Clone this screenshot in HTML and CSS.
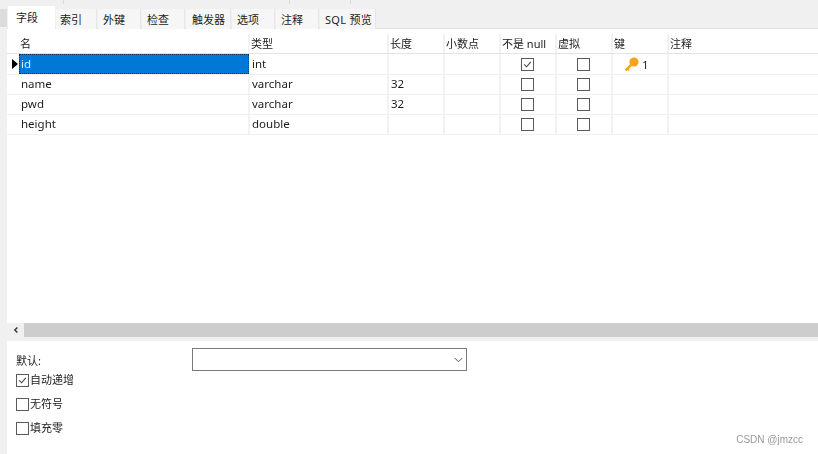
FILE: index.html
```html
<!DOCTYPE html>
<html lang="zh-CN">
<head>
<meta charset="utf-8">
<title>字段</title>
<link rel="stylesheet" href="styles.css">
</head>
<body>
<div class="app">
  <aside class="rail"><div class="rail-mark"></div></aside>
  <main class="content">
    <div class="topbar">
      <div class="toolstrip">
        <span class="tool tool-a"></span>
        <span class="tool tool-b"></span>
        <span class="tool tool-c"></span>
      </div>
      <nav class="tabs">
        <span class="tab active">字段</span>
        <span class="tab w41">索引</span>
        <span class="tab w43">外键</span>
        <span class="tab w43">检查</span>
        <span class="tab w44">触发器</span>
        <span class="tab w42">选项</span>
        <span class="tab w42">注释</span>
        <span class="tab w55">SQL 预览</span>
      </nav>
    </div>
    <section class="grid">
      <div class="row head">
        <div class="mark"></div>
        <div class="cell">名</div><div class="cell">类型</div><div class="cell">长度</div><div class="cell">小数点</div><div class="cell">不是 null</div><div class="cell">虚拟</div><div class="cell">键</div><div class="cell">注释</div>
      </div>
      <div class="row current">
        <div class="mark"><span class="arrow"></span></div>
        <div class="cell selected">id</div><div class="cell">int</div><div class="cell"></div><div class="cell"></div>
        <div class="cell center"><span class="box checked"><svg viewBox="0 0 11 11"><path d="M2.2 5.4 4.6 7.8 8.8 2.8"/></svg></span></div>
        <div class="cell center"><span class="box"></span></div>
        <div class="cell keycell"><svg class="key" viewBox="0 0 15 15"><circle cx="10" cy="5" r="4.6"/><path class="shaft" d="M7.4 7.6 1.6 13.4"/><path class="shaft thin" d="M3.2 11.6 5 13.4"/></svg><span>1</span></div>
        <div class="cell"></div>
      </div>
      <div class="row">
        <div class="mark"></div>
        <div class="cell">name</div><div class="cell">varchar</div><div class="cell">32</div><div class="cell"></div>
        <div class="cell center"><span class="box"></span></div>
        <div class="cell center"><span class="box"></span></div>
        <div class="cell"></div><div class="cell"></div>
      </div>
      <div class="row">
        <div class="mark"></div>
        <div class="cell">pwd</div><div class="cell">varchar</div><div class="cell">32</div><div class="cell"></div>
        <div class="cell center"><span class="box"></span></div>
        <div class="cell center"><span class="box"></span></div>
        <div class="cell"></div><div class="cell"></div>
      </div>
      <div class="row">
        <div class="mark"></div>
        <div class="cell">height</div><div class="cell">double</div><div class="cell"></div><div class="cell"></div>
        <div class="cell center"><span class="box"></span></div>
        <div class="cell center"><span class="box"></span></div>
        <div class="cell"></div><div class="cell"></div>
      </div>
    </section>
    <div class="hscroll">
      <span class="hscroll-btn"><svg viewBox="0 0 8 8"><path d="M5.4 1.4 2.8 4l2.6 2.6"/></svg></span>
      <span class="hscroll-thumb"></span>
    </div>
    <section class="props">
      <div class="default-row">
        <label class="default-label">默认:</label>
        <div class="select"><svg viewBox="0 0 10 6"><path d="M.8.8 5 5 9.2.8"/></svg></div>
      </div>
      <div class="opt first"><span class="box checked"><svg viewBox="0 0 11 11"><path d="M2.2 5.4 4.6 7.8 8.8 2.8"/></svg></span>自动递增</div>
      <div class="opt"><span class="box"></span>无符号</div>
      <div class="opt"><span class="box"></span>填充零</div>
      <div class="watermark">CSDN @jmzcc</div>
    </section>
  </main>
</div>
</body>
</html>
```
FILE: styles.css
```css
* { box-sizing: border-box; }
html, body { margin: 0; height: 100%; }
body {
  background: #fff;
  color: #1c1c1c;
  font: 11.5px/20px "Noto Sans", "Noto Sans CJK SC", sans-serif;
  overflow: hidden;
}
.app { display: flex; width: 818px; height: 454px; filter: blur(0.4px); }
.rail { width: 7px; background: #f0f0f0; padding-top: 9px; flex: none; }
.rail-mark { height: 18px; background: #dcdcdc; }
.content { flex: 1; min-width: 0; display: flex; flex-direction: column; }

.topbar { height: 29px; background: #f0f0f0; border-bottom: 1px solid #e0e0e0; flex: none; }
.toolstrip { height: 5px; display: flex; }
.tool { height: 4px; border-right: 1px solid #dadada; }
.tool-a { width: 57px; }
.tool-b { width: 226px; }
.tool-c { width: 61px; }
.tabs { display: flex; height: 24px; padding-left: 1px; gap: 1px; align-items: flex-end; font-size: 11px; }
.tab {
  height: 20px;
  background: #f6f6f6;
  border-right: 1px solid #e6e6e6;
  padding-left: 5px;
  line-height: 21px;
  flex: none;
  white-space: nowrap;
}
.tab.active { width: 47px; height: 24px; background: #fff; border-right: 0; margin-bottom: -1px; padding-left: 8px; line-height: 24px; }
.w41 { width: 41px; padding-left: 4px; }
.w42 { width: 43px; }
.w43 { width: 43px; }
.w44 { width: 45px; padding-left: 6px; }
.w55 { width: 56px; letter-spacing: 0.3px; }

.grid { flex: 1; padding-top: 5px; min-height: 0; }
.row {
  display: grid;
  grid-template-columns: 12px 231px 139px 56px 56px 56px 56px 56px 1fr;
  height: 20px;
  border-bottom: 1px solid #f0f0f0;
}
.head { border-bottom: 1px solid #e4e4e4; font-size: 11px; }
.current { height: 21px; }
.mark { display: flex; align-items: center; justify-content: flex-end; padding-right: 1px; }
.cell {
  border-right: 2px solid #f2f2f2;
  padding-left: 2px;
  white-space: nowrap;
  overflow: hidden;
  line-height: 18px;
}
.head .cell { line-height: 19px; padding-left: 1px; }
.current .cell { line-height: 19px; }
.row .cell:last-child { border-right: 0; }
.arrow { width: 0; height: 0; border-left: 6px solid #000; border-top: 5.5px solid transparent; border-bottom: 5.5px solid transparent; }
.selected { background: #0078d7; color: #dfeeff; outline: 1px dotted #0b2f57; outline-offset: -1px; margin: 0 1px 0 0; border-right: 0; }
.center { display: flex; align-items: center; justify-content: center; padding-left: 0; padding-right: 1px; }
.box {
  width: 13px;
  height: 13px;
  border: 1px solid #5a5a5a;
  background: #fff;
  display: block;
  flex: none;
}
.box svg { display: block; width: 11px; height: 11px; }
.box path { fill: none; stroke: #444; stroke-width: 1.1; }
.keycell { display: flex; align-items: center; padding-left: 11px; gap: 3px; }
.key { width: 15px; height: 15px; flex: none; }
.key circle { fill: #f7a41d; }
.key .shaft { stroke: #f7a41d; stroke-width: 2.6; fill: none; }
.key .thin { stroke-width: 1.6; }

.hscroll { height: 18px; display: flex; border-bottom: 4px solid #f0f0f0; flex: none; }
.hscroll-btn { width: 17px; background: #f0f0f0; display: flex; align-items: center; justify-content: center; }
.hscroll-btn svg { width: 8px; height: 8px; }
.hscroll-btn path { fill: none; stroke: #333; stroke-width: 1.4; }
.hscroll-thumb { flex: 1; background: #cdcdcd; }

.props { height: 113px; padding: 7px 0 0 9px; position: relative; flex: none; font-size: 11px; }
.default-row { display: flex; height: 23px; }
.default-label { width: 176px; padding-top: 3px; line-height: 20px; }
.select {
  width: 275px;
  height: 23px;
  border: 1px solid #7a7a7a;
  display: flex;
  align-items: center;
  justify-content: flex-end;
  padding-right: 3px;
}
.select svg { width: 9px; height: 6px; }
.select path { fill: none; stroke: #444; stroke-width: 1; }
.opt { display: flex; align-items: center; gap: 1px; height: 24px; }
.opt.first { margin-top: -3px; }
.watermark {
  position: absolute;
  right: 15px;
  bottom: 7px;
  color: #999;
  font: 10px/14px "Liberation Sans", sans-serif;
}
```
